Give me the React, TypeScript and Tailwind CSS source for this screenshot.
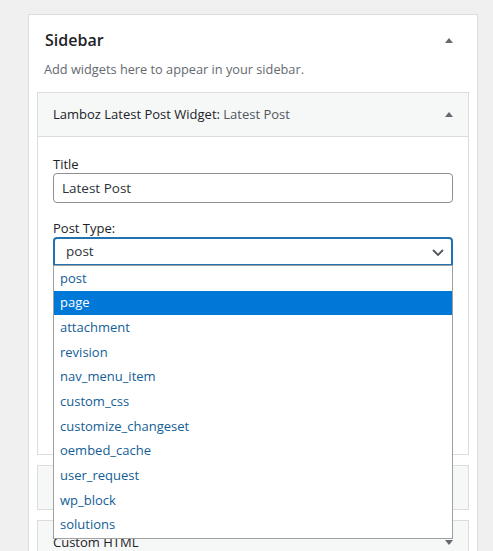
const postTypes = [
  'post',
  'page',
  'attachment',
  'revision',
  'nav_menu_item',
  'custom_css',
  'customize_changeset',
  'oembed_cache',
  'user_request',
  'wp_block',
  'solutions',
]

const Arrow = ({ down = false }: { down?: boolean }): JSX.Element => (
  <svg width="8" height="5" viewBox="0 0 8 5" className="shrink-0">
    <polygon points={down ? '0,0 8,0 4,5' : '0,5 8,5 4,0'} fill="#646970" />
  </svg>
)

const WidgetHeader = ({ title, sub, down = true }: { title?: string; sub?: string; down?: boolean }): JSX.Element => (
  <div className="flex h-[43px] items-center justify-between bg-[#f6f7f7] pl-[15px] pr-[15px]">
    <h3 className="text-[13px] font-medium text-[#1d2327]">
      {title}
      {sub && <span className="font-normal text-[#50575e]"> {sub}</span>}
    </h3>
    <Arrow down={down} />
  </div>
)

const App = (): JSX.Element => {
  return (
    <div className="h-[551px] w-[493px] overflow-hidden bg-[#f0f0f1] pl-[28px] pt-[14px] font-['Open_Sans',sans-serif]">
      <div className="w-[450px] border border-[#dcdcde] bg-white pb-10">
        <div className="flex items-center justify-between pl-4 pr-6 pt-[13px]">
          <h2 className="text-[16px] font-semibold leading-6 text-[#1d2327]">Sidebar</h2>
          <Arrow />
        </div>
        <p className="mt-[7px] pl-[15px] text-[12.75px] leading-5 text-[#646970]">
          Add widgets here to appear in your sidebar.
        </p>

        <div className="mx-2 mt-[13px] border border-[#dcdcde]">
          <div className="border-b border-[#dcdcde]">
            <WidgetHeader title="Lamboz Latest Post Widget:" sub="Latest Post" down={false} />
          </div>
          <div className="h-[317px] px-[15px] pt-[18px]">
            <label htmlFor="title" className="block text-[13px] leading-[18px] text-[#1d2327]">
              Title
            </label>
            <input
              id="title"
              type="text"
              defaultValue="Latest Post"
              className="block h-[30px] w-full rounded-[4px] border border-[#8c8f94] px-2 text-[13.5px] text-[#2c3338] outline-none"
            />
            <label className="mt-[16px] block text-[13px] leading-[18px] text-[#1d2327]">Post Type:</label>
            <div className="relative">
              <div className="flex h-[29px] items-center justify-between rounded-t-[4px] border-2 border-[#2271b1] pl-[11px] pr-[7px] text-[13.5px] text-[#2c3338]">
                <span>post</span>
                <svg width="12" height="7" viewBox="0 0 12 7" fill="none" className="mt-px">
                  <polyline points="1,1 6,6 11,1" stroke="#50575e" strokeWidth="1.8" />
                </svg>
              </div>
              <ul className="absolute left-0 top-[28px] z-10 w-full border border-[#a0a0a0] bg-white">
                {postTypes.map((type) => (
                  <li
                    key={type}
                    className={
                      type === 'page'
                        ? 'flex h-[24.7px] items-center bg-[#0078d7] pl-[6px] text-[13px] text-white'
                        : 'flex h-[24.7px] items-center pl-[6px] text-[13px] text-[#135e96]'
                    }
                  >
                    {type}
                  </li>
                ))}
              </ul>
            </div>
          </div>
        </div>

        <div className="mx-2 mt-[10px] border border-[#dcdcde]">
          <WidgetHeader />
        </div>

        <div className="mx-2 mt-[10px] border border-[#dcdcde]">
          <WidgetHeader title="Custom HTML" />
        </div>
      </div>
    </div>
  )
}

export default App
